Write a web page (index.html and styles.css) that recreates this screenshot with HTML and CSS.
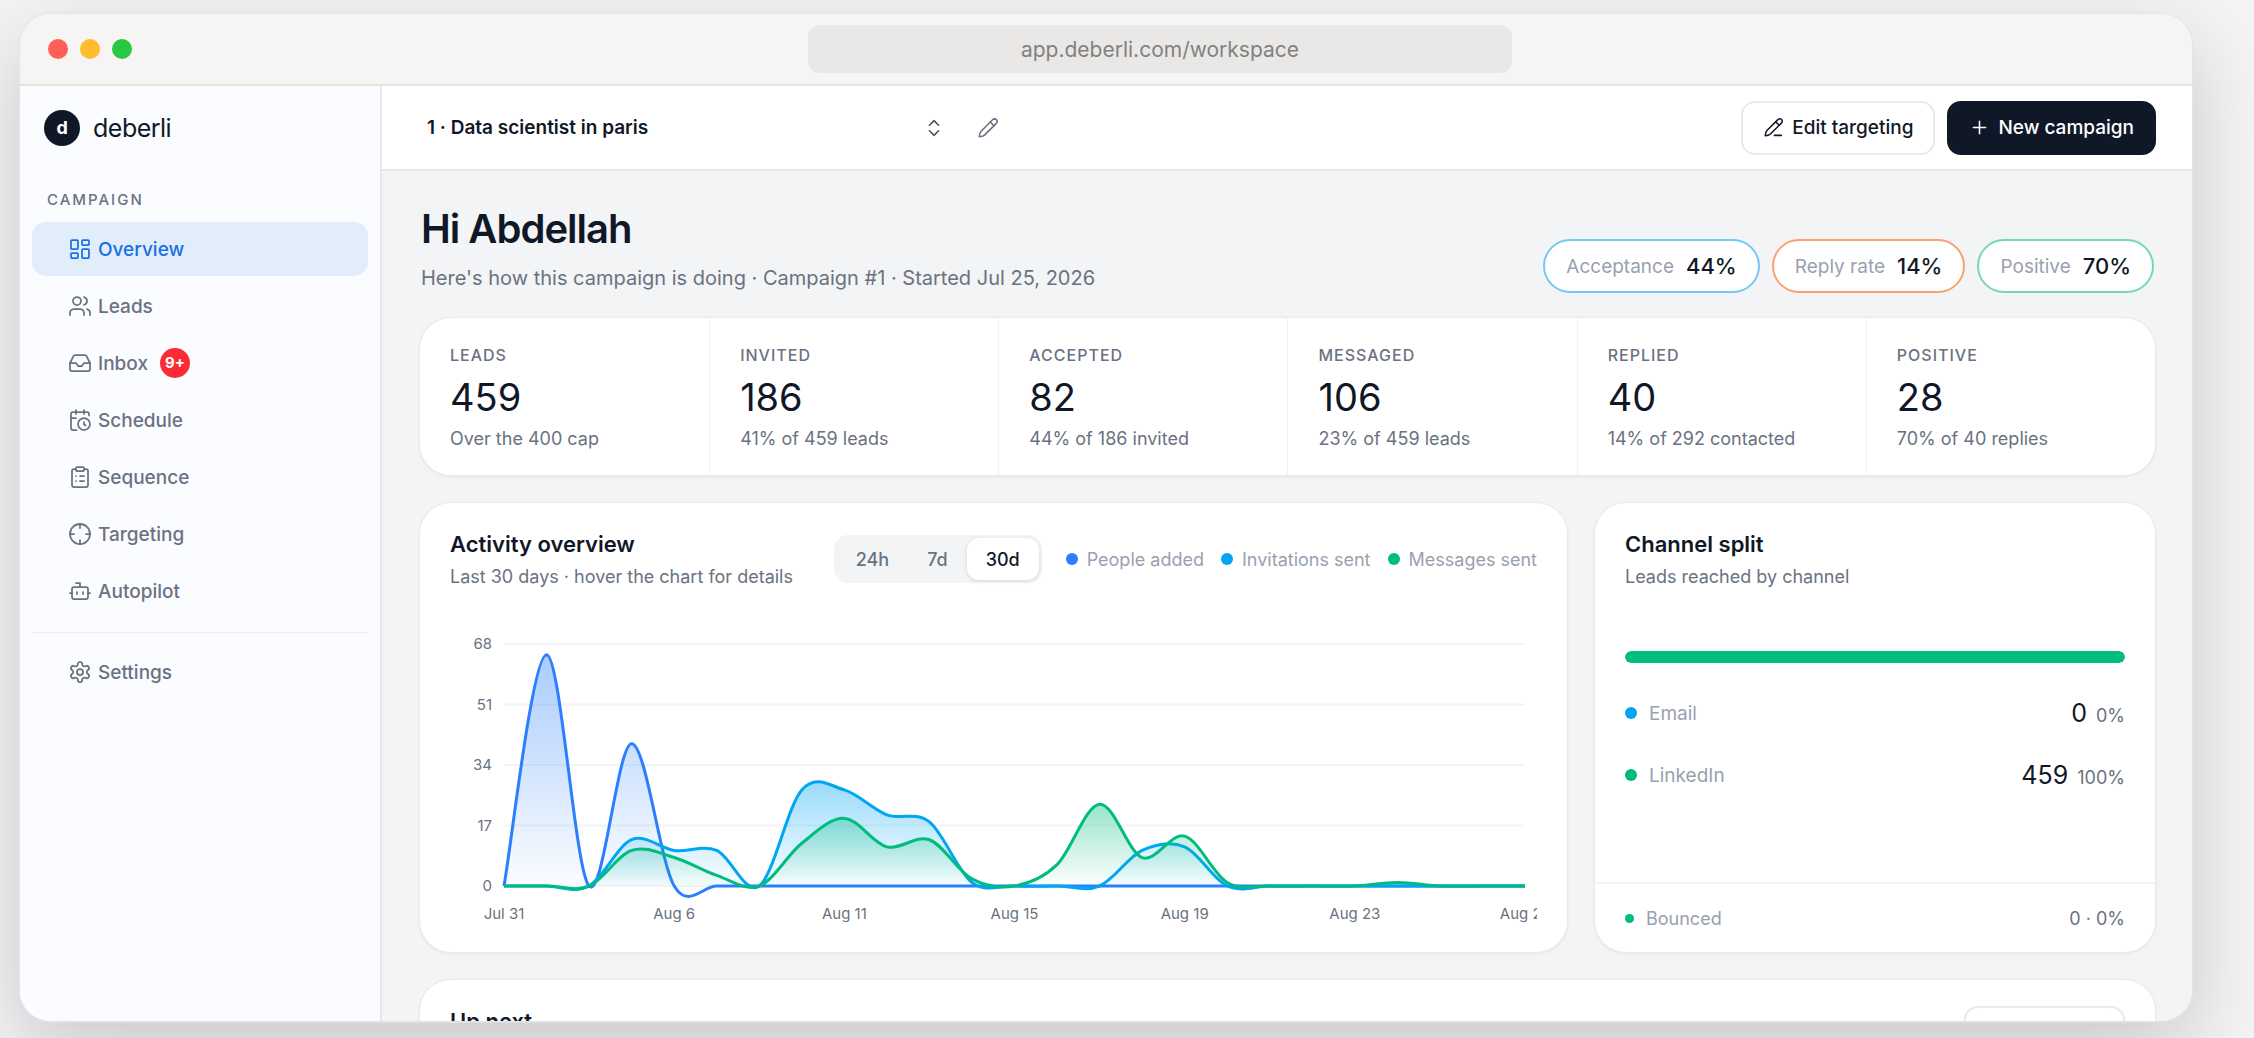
FILE: index.html
```html
<!DOCTYPE html>
<html lang="en">
<head>
  <meta charset="UTF-8">
  <title>deberli - workspace</title>
  <link rel="stylesheet" href="styles.css">
</head>
<body>
  <div class="window">
    <div class="titlebar">
      <div class="lights">
        <span class="light red"></span>
        <span class="light yellow"></span>
        <span class="light green"></span>
      </div>
      <input class="address" type="text" value="app.deberli.com/workspace" aria-label="Address" readonly>
    </div>

    <div class="app">
      <!-- Sidebar -->
      <aside class="sidebar">
        <a class="brand" href="#"><span class="brand-mark">d</span>deberli</a>
        <p class="nav-label">Campaign</p>
        <nav class="nav">
          <a class="nav-item active" href="#">
            <svg class="icon" viewBox="0 0 24 24"><rect width="7" height="9" x="3" y="3" rx="1"/><rect width="7" height="5" x="14" y="3" rx="1"/><rect width="7" height="9" x="14" y="12" rx="1"/><rect width="7" height="5" x="3" y="16" rx="1"/></svg>
            Overview
          </a>
          <a class="nav-item" href="#">
            <svg class="icon" viewBox="0 0 24 24"><path d="M16 21v-2a4 4 0 0 0-4-4H6a4 4 0 0 0-4 4v2"/><circle cx="9" cy="7" r="4"/><path d="M22 21v-2a4 4 0 0 0-3-3.87"/><path d="M16 3.13a4 4 0 0 1 0 7.75"/></svg>
            Leads
          </a>
          <a class="nav-item" href="#">
            <svg class="icon" viewBox="0 0 24 24"><path d="M22 12h-6l-2 3h-4l-2-3H2"/><path d="M5.45 5.11 2 12v6a2 2 0 0 0 2 2h16a2 2 0 0 0 2-2v-6l-3.45-6.89A2 2 0 0 0 16.76 4H7.24a2 2 0 0 0-1.79 1.11z"/></svg>
            Inbox <span class="count">9+</span>
          </a>
          <a class="nav-item" href="#">
            <svg class="icon" viewBox="0 0 24 24"><path d="M21 7.5V6a2 2 0 0 0-2-2H5a2 2 0 0 0-2 2v14a2 2 0 0 0 2 2h3.5"/><path d="M16 2v4"/><path d="M8 2v4"/><path d="M3 10h5"/><path d="M17.5 17.5 16 16.3V14"/><circle cx="16" cy="16" r="6"/></svg>
            Schedule
          </a>
          <a class="nav-item" href="#">
            <svg class="icon" viewBox="0 0 24 24"><rect width="8" height="4" x="8" y="2" rx="1"/><path d="M16 4h2a2 2 0 0 1 2 2v14a2 2 0 0 1-2 2H6a2 2 0 0 1-2-2V6a2 2 0 0 1 2-2h2"/><path d="M12 11h4"/><path d="M12 16h4"/><path d="M8 11h.01"/><path d="M8 16h.01"/></svg>
            Sequence
          </a>
          <a class="nav-item" href="#">
            <svg class="icon" viewBox="0 0 24 24"><circle cx="12" cy="12" r="10"/><path d="M22 12h-4"/><path d="M6 12H2"/><path d="M12 6V2"/><path d="M12 22v-4"/></svg>
            Targeting
          </a>
          <a class="nav-item" href="#">
            <svg class="icon" viewBox="0 0 24 24"><path d="M12 8V4H8"/><rect width="16" height="12" x="4" y="8" rx="2"/><path d="M2 14h2"/><path d="M20 14h2"/><path d="M15 13v2"/><path d="M9 13v2"/></svg>
            Autopilot
          </a>
        </nav>
        <nav class="nav nav-bottom">
          <a class="nav-item" href="#">
            <svg class="icon" viewBox="0 0 24 24"><path d="M12.22 2h-.44a2 2 0 0 0-2 2v.18a2 2 0 0 1-1 1.73l-.43.25a2 2 0 0 1-2 0l-.15-.08a2 2 0 0 0-2.73.73l-.22.38a2 2 0 0 0 .73 2.73l.15.1a2 2 0 0 1 1 1.72v.51a2 2 0 0 1-1 1.74l-.15.09a2 2 0 0 0-.73 2.73l.22.38a2 2 0 0 0 2.73.73l.15-.08a2 2 0 0 1 2 0l.43.25a2 2 0 0 1 1 1.73V20a2 2 0 0 0 2 2h.44a2 2 0 0 0 2-2v-.18a2 2 0 0 1 1-1.73l.43-.25a2 2 0 0 1 2 0l.15.08a2 2 0 0 0 2.73-.73l.22-.39a2 2 0 0 0-.73-2.73l-.15-.08a2 2 0 0 1-1-1.74v-.5a2 2 0 0 1 1-1.74l.15-.09a2 2 0 0 0 .73-2.73l-.22-.38a2 2 0 0 0-2.73-.73l-.15.08a2 2 0 0 1-2 0l-.43-.25a2 2 0 0 1-1-1.73V4a2 2 0 0 0-2-2z"/><circle cx="12" cy="12" r="3"/></svg>
            Settings
          </a>
        </nav>
      </aside>

      <main class="main">
        <header class="topbar">
          <div class="picker">
            <select class="picker-select" aria-label="Campaign">
              <option>1 · Data scientist in paris</option>
            </select>
            <svg class="icon picker-icon" viewBox="0 0 24 24"><path d="m7 15 5 5 5-5"/><path d="m7 9 5-5 5 5"/></svg>
          </div>
          <button class="icon-btn" type="button" aria-label="Rename campaign">
            <svg class="icon" viewBox="0 0 24 24"><path d="M17 3a2.85 2.83 0 1 1 4 4L8.5 19.5Q6.5 21.4 2.5 21.5Q2.6 17.5 4.5 15.5Z"/><path d="m14.5 5.5 4 4"/></svg>
          </button>
          <div class="actions">
            <button class="btn" type="button">
              <svg class="icon" viewBox="0 0 24 24"><path d="M13 21h8"/><path d="M17 3a2.85 2.83 0 1 1 4 4L8.5 19.5Q6.5 21.4 2.5 21.5Q2.6 17.5 4.5 15.5Z"/><path d="m14.5 5.5 4 4"/></svg>
              Edit targeting
            </button>
            <button class="btn btn-dark" type="button">
              <svg class="icon" viewBox="0 0 24 24"><path d="M5 12h14"/><path d="M12 5v14"/></svg>
              New campaign
            </button>
          </div>
        </header>

        <div class="content">
          <section class="hero">
            <div>
              <h1>Hi Abdellah</h1>
              <p class="hero-sub">Here's how this campaign is doing · Campaign #1 · Started Jul 25, 2026</p>
            </div>
            <div class="pills">
              <span class="pill sky">Acceptance <b>44%</b></span>
              <span class="pill orange">Reply rate <b>14%</b></span>
              <span class="pill emerald">Positive <b>70%</b></span>
            </div>
          </section>

          <section class="card stats">
            <div class="stat"><h3>Leads</h3><strong>459</strong><p>Over the 400 cap</p></div>
            <div class="stat"><h3>Invited</h3><strong>186</strong><p>41% of 459 leads</p></div>
            <div class="stat"><h3>Accepted</h3><strong>82</strong><p>44% of 186 invited</p></div>
            <div class="stat"><h3>Messaged</h3><strong>106</strong><p>23% of 459 leads</p></div>
            <div class="stat"><h3>Replied</h3><strong>40</strong><p>14% of 292 contacted</p></div>
            <div class="stat"><h3>Positive</h3><strong>28</strong><p>70% of 40 replies</p></div>
          </section>

          <div class="panels">
            <section class="card activity">
              <div class="card-head">
                <div>
                  <h2>Activity overview</h2>
                  <p class="card-sub">Last 30 days · hover the chart for details</p>
                </div>
                <div class="controls">
                  <div class="segmented">
                    <button type="button">24h</button>
                    <button type="button">7d</button>
                    <button type="button" class="selected">30d</button>
                  </div>
                  <ul class="legend">
                    <li><span class="dot bg-blue"></span>People added</li>
                    <li><span class="dot bg-sky"></span>Invitations sent</li>
                    <li><span class="dot bg-emerald"></span>Messages sent</li>
                  </ul>
                </div>
              </div>
              <svg class="chart" id="chart" viewBox="0 0 1087 305" role="img" aria-label="Activity over the last 30 days">
                <defs>
                  <linearGradient id="fill-blue" x1="0" y1="0" x2="0" y2="1"><stop class="stop-blue" offset="0" stop-opacity="0.4"/><stop class="stop-blue" offset="1" stop-opacity="0"/></linearGradient>
                  <linearGradient id="fill-sky" x1="0" y1="0" x2="0" y2="1"><stop class="stop-sky" offset="0" stop-opacity="0.4"/><stop class="stop-sky" offset="1" stop-opacity="0"/></linearGradient>
                  <linearGradient id="fill-emerald" x1="0" y1="0" x2="0" y2="1"><stop class="stop-emerald" offset="0" stop-opacity="0.4"/><stop class="stop-emerald" offset="1" stop-opacity="0"/></linearGradient>
                </defs>
              </svg>
            </section>

            <section class="card channel">
              <div class="channel-body">
                <h2>Channel split</h2>
                <p class="card-sub">Leads reached by channel</p>
                <div class="bar"><span class="bar-fill bg-emerald" style="width: 100%"></span></div>
                <div class="channel-row">
                  <span class="dot bg-sky"></span>Email
                  <span class="value"><b>0</b> 0%</span>
                </div>
                <div class="channel-row">
                  <span class="dot bg-emerald"></span>LinkedIn
                  <span class="value"><b>459</b> 100%</span>
                </div>
              </div>
              <div class="channel-foot">
                <span class="dot small bg-emerald"></span>Bounced
                <span class="value">0 · 0%</span>
              </div>
            </section>
          </div>

          <section class="card upnext">
            <h2>Up next</h2>
            <button class="btn" type="button">View all</button>
          </section>
        </div>
      </main>
    </div>
  </div>
  <script src="chart.js"></script>
</body>
</html>
```
FILE: styles.css
```css
* { box-sizing: border-box; margin: 0; padding: 0; }
body {
  height: 100vh;
  padding: 13px 61px 15px 19px;
  overflow: hidden;
  background-color: #f4f4f7;
  color: #101828;
  font-family: Inter, "Liberation Sans", sans-serif;
  font-size: 19px;
}
button, input, select { font: inherit; color: inherit; border: none; background: none; }
a { color: inherit; text-decoration: none; }
ul { list-style: none; }
.icon {
  width: 24px;
  height: 24px;
  flex: none;
  fill: none;
  stroke: currentColor;
  stroke-width: 1.75;
  stroke-linecap: round;
  stroke-linejoin: round;
}

/* Browser window */
.window {
  display: flex;
  flex-direction: column;
  height: 100%;
  overflow: hidden;
  border: 1px solid #e4e4e4;
  border-bottom: 2px solid #e0e1e3;
  border-radius: 32px;
  background-color: #f3f4f6;
  box-shadow: 0 28px 84px rgba(0, 0, 0, 0.18);
}
.titlebar {
  display: flex;
  align-items: center;
  flex: none;
  gap: 20px;
  height: 72px;
  padding: 0 24px 0 28px;
  background-color: #f6f5f4;
  border-bottom: 2px solid #e5e4e2;
}
.lights { display: flex; gap: 12px; }
.light { width: 20px; height: 20px; border-radius: 50%; }
.red { background-color: #ff5f57; }
.yellow { background-color: #febc2e; }
.green { background-color: #28c840; }
.address {
  width: 704px;
  height: 48px;
  margin: 0 auto;
  border-radius: 12px;
  background-color: #e9e8e6;
  color: #82817f;
  font-size: 21px;
  text-align: center;
}
.app { display: flex; flex: 1; min-height: 0; }

/* Sidebar */
.sidebar {
  flex: none;
  width: 362px;
  padding: 24px 12px;
  background-color: #fafcff;
  border-right: 2px solid #e5e7eb;
}
.brand {
  display: flex;
  align-items: center;
  gap: 13px;
  padding-left: 12px;
  font-size: 25px;
  line-height: 36px;
  letter-spacing: -0.5px;
}
.brand-mark {
  width: 36px;
  height: 36px;
  border-radius: 50%;
  background-color: #101828;
  color: #fff;
  font-size: 18px;
  font-weight: 700;
  text-align: center;
}
.nav-label {
  margin-top: 42px;
  padding-left: 15px;
  color: #6a7282;
  font-size: 15px;
  font-weight: 500;
  line-height: 24px;
  letter-spacing: 2px;
  text-transform: uppercase;
}
.nav { display: flex; flex-direction: column; gap: 3px; margin-top: 10px; }
.nav-item {
  display: flex;
  align-items: center;
  gap: 6px;
  height: 54px;
  padding-left: 36px;
  border-radius: 14px;
  color: #6a7282;
  font-weight: 500;
}
.nav-item.active { background-color: #e1edfa; color: #1a6fe8; }
.count {
  width: 30px;
  height: 30px;
  margin-left: 6px;
  border-radius: 50%;
  background-color: #fb2c36;
  color: #fff;
  font-size: 15px;
  font-weight: 700;
  line-height: 30px;
  text-align: center;
}
.nav-bottom { margin-top: 14px; padding-top: 12px; border-top: 1px solid #edeff3; }

/* Top bar */
.main { display: flex; flex: 1; flex-direction: column; min-width: 0; }
.topbar {
  display: flex;
  align-items: center;
  flex: none;
  gap: 28px;
  height: 85px;
  padding: 0 36px 0 45px;
  background-color: #fff;
  border-bottom: 2px solid #e5e7eb;
}
.picker { display: flex; align-items: center; width: 518px; }
.picker-select {
  flex: 1;
  height: 54px;
  margin-right: -24px;
  appearance: none;
  font-weight: 600;
}
.picker-icon { width: 22px; height: 22px; pointer-events: none; color: #4a5565; }
.icon-btn { display: flex; padding: 4px; color: #6a7282; }
.icon-btn .icon { width: 22px; height: 22px; }
.actions { display: flex; gap: 12px; margin-left: auto; }
.btn {
  display: flex;
  align-items: center;
  justify-content: center;
  gap: 8px;
  height: 54px;
  padding: 0 20px;
  border: 2px solid #e9eaec;
  border-radius: 14px;
  background-color: #fff;
  font-weight: 500;
}
.btn .icon { width: 21px; height: 21px; }
.btn-dark { border-color: #101828; background-color: #101828; color: #fff; }

/* Content */
.content {
  flex: 1;
  min-height: 0;
  padding: 36px 36px 0 37px;
  overflow: hidden;
}
.hero {
  display: flex;
  align-items: flex-end;
  justify-content: space-between;
  margin-bottom: 24px;
  padding: 0 2px;
}
h1 { font-size: 40px; font-weight: 600; line-height: 44px; letter-spacing: -1px; }
.hero-sub { margin-top: 12px; color: #6a7282; font-size: 20px; line-height: 30px; }
.pills { display: flex; gap: 12px; }
.pill {
  display: flex;
  align-items: center;
  gap: 12px;
  height: 54px;
  padding: 0 21px;
  border: 2px solid;
  border-radius: 27px;
  background-color: #fff;
  color: #99a1af;
}
.pill b { color: #101828; font-size: 22px; font-weight: 500; }
.pill.sky { border-color: #74c8f8; }
.pill.orange { border-color: #fba070; }
.pill.emerald { border-color: #74d8b0; }
.card {
  border: 1px solid #e8eaed;
  border-radius: 32px;
  background-color: #fff;
  box-shadow: 0 1px 3px rgba(0, 0, 0, 0.06);
}
h2 { font-size: 22px; font-weight: 600; line-height: 30px; }
.card-sub { margin-top: 4px; color: #6a7282; font-size: 18px; line-height: 28px; }

.stats {
  display: grid;
  grid-template-columns: repeat(6, 1fr);
  margin-bottom: 26px;
  overflow: hidden;
}
.stat { padding: 25px 30px 22px; border-left: 1px solid #f0f1f4; }
.stat:first-child { border-left: none; }
.stat h3 {
  color: #6a7282;
  font-size: 16px;
  font-weight: 500;
  line-height: 24px;
  letter-spacing: 1px;
  text-transform: uppercase;
}
.stat strong { display: block; margin-top: 8px; font-size: 38px; font-weight: 400; line-height: 44px; }
.stat p { margin-top: 6px; color: #6a7282; font-size: 18px; line-height: 28px; }

.panels {
  display: grid;
  grid-template-columns: 1149fr 562fr;
  gap: 26px;
  margin-bottom: 26px;
}
.activity { padding: 26px 30px; }
.card-head { display: flex; justify-content: space-between; }
.controls { display: flex; align-items: center; gap: 24px; height: 60px; }
.segmented {
  display: flex;
  padding: 3px;
  border-radius: 14px;
  background-color: #f3f4f6;
}
.segmented button {
  height: 42px;
  padding: 0 19px;
  border-radius: 12px;
  color: #6a7282;
  font-size: 18px;
  font-weight: 500;
}
.segmented .selected {
  background-color: #fff;
  color: #101828;
  box-shadow: 0 1px 4px rgba(0, 0, 0, 0.12);
}
.legend { display: flex; gap: 17px; color: #99a1af; font-size: 18px; }
.legend li { display: flex; align-items: center; gap: 9px; }
.dot { flex: none; width: 12px; height: 12px; border-radius: 50%; }
.dot.small { width: 9px; height: 9px; }
.bg-blue { background-color: #2b7fff; }
.bg-sky { background-color: #00a6f4; }
.bg-emerald { background-color: #00bc7d; }

/* Chart */
.chart { display: block; width: 100%; margin-top: 30px; overflow: hidden; }
.grid-line { stroke: #f3f4f6; stroke-width: 2; }
.tick { fill: #6a7282; font-size: 15px; }
.line { fill: none; stroke-width: 3; }
.line-blue { stroke: #2b7fff; }
.line-sky { stroke: #00a6f4; }
.line-emerald { stroke: #00bc7d; }
.stop-blue { stop-color: #2b7fff; }
.stop-sky { stop-color: #00a6f4; }
.stop-emerald { stop-color: #00bc7d; }

/* Channel split */
.channel { display: flex; flex-direction: column; }
.channel-body { flex: 1; padding: 26px 30px; }
.bar { height: 12px; margin: 60px 0 25px; border-radius: 6px; background-color: #f3f4f6; overflow: hidden; }
.bar-fill { display: block; height: 100%; border-radius: 6px; }
.channel-row {
  display: flex;
  align-items: center;
  gap: 12px;
  height: 50px;
  margin-bottom: 12px;
  color: #99a1af;
}
.value { margin-left: auto; color: #6a7282; font-size: 18px; }
.value b { margin-right: 4px; color: #101828; font-size: 25px; font-weight: 400; }
.channel-foot {
  display: flex;
  align-items: center;
  gap: 12px;
  height: 70px;
  padding: 0 30px;
  border-top: 2px solid #f3f4f6;
  color: #99a1af;
  font-size: 18px;
}

.upnext { display: flex; justify-content: space-between; padding: 26px 30px; }
.upnext .btn { min-width: 161px; }
```
FILE: chart.js
```javascript
// plot area inside the svg
const left = 54, right = 1075, top68 = 23, base = 265, max = 68;
const ns = "http://www.w3.org/2000/svg";
const chart = document.getElementById("chart");

const series = [
  { name: "blue", data: [0, 65, 0, 40, 0, 0, 0, 0, 0, 0, 0, 0, 0, 0, 0, 0, 0, 0, 0, 0, 0, 0, 0, 0, 0] },
  { name: "sky", data: [0, 0, 0, 13, 10, 10, 0, 27, 27, 20, 18, 1, 0, 0, 0, 10, 11, 0, 0, 0, 0, 0, 0, 0, 0] },
  { name: "emerald", data: [0, 0, 0, 10, 8, 3, 0, 12, 19, 11, 13, 2, 0, 6, 23, 8, 14, 1, 0, 0, 0, 1, 0, 0, 0] }
];
const labels = ["Jul 31", "Aug 6", "Aug 11", "Aug 15", "Aug 19", "Aug 23", "Aug 27"];

function add(tag, attrs, text) {
  const el = document.createElementNS(ns, tag);
  for (const key in attrs) el.setAttribute(key, attrs[key]);
  if (text !== undefined) el.textContent = text;
  chart.appendChild(el);
}

function px(i) { return left + (right - left) * i / 24; }
function py(v) { return base - (base - top68) * v / max; }

// smooth curve through all the points
function curve(data) {
  let d = `M${px(0)} ${py(data[0])}`;
  for (let i = 0; i < data.length - 1; i++) {
    const prev = Math.max(i - 1, 0);
    const next = Math.min(i + 2, data.length - 1);
    const x1 = px(i) + (px(i + 1) - px(prev)) / 6;
    const y1 = py(data[i]) + (py(data[i + 1]) - py(data[prev])) / 6;
    const x2 = px(i + 1) - (px(next) - px(i)) / 6;
    const y2 = py(data[i + 1]) - (py(data[next]) - py(data[i])) / 6;
    d += ` C${x1} ${y1} ${x2} ${y2} ${px(i + 1)} ${py(data[i + 1])}`;
  }
  return d;
}

[68, 51, 34, 17, 0].forEach(v => {
  add("line", { class: "grid-line", x1: left, x2: right, y1: py(v), y2: py(v) });
  add("text", { class: "tick", x: left - 12, y: py(v) + 5, "text-anchor": "end" }, v);
});

labels.forEach((label, i) => {
  add("text", { class: "tick", x: px(i * 4), y: base + 33, "text-anchor": "middle" }, label);
});

series.forEach(s => {
  const d = curve(s.data);
  add("path", { d: `${d} L${right} ${base} L${left} ${base} Z`, fill: `url(#fill-${s.name})` });
  add("path", { class: `line line-${s.name}`, d: d });
});
```
